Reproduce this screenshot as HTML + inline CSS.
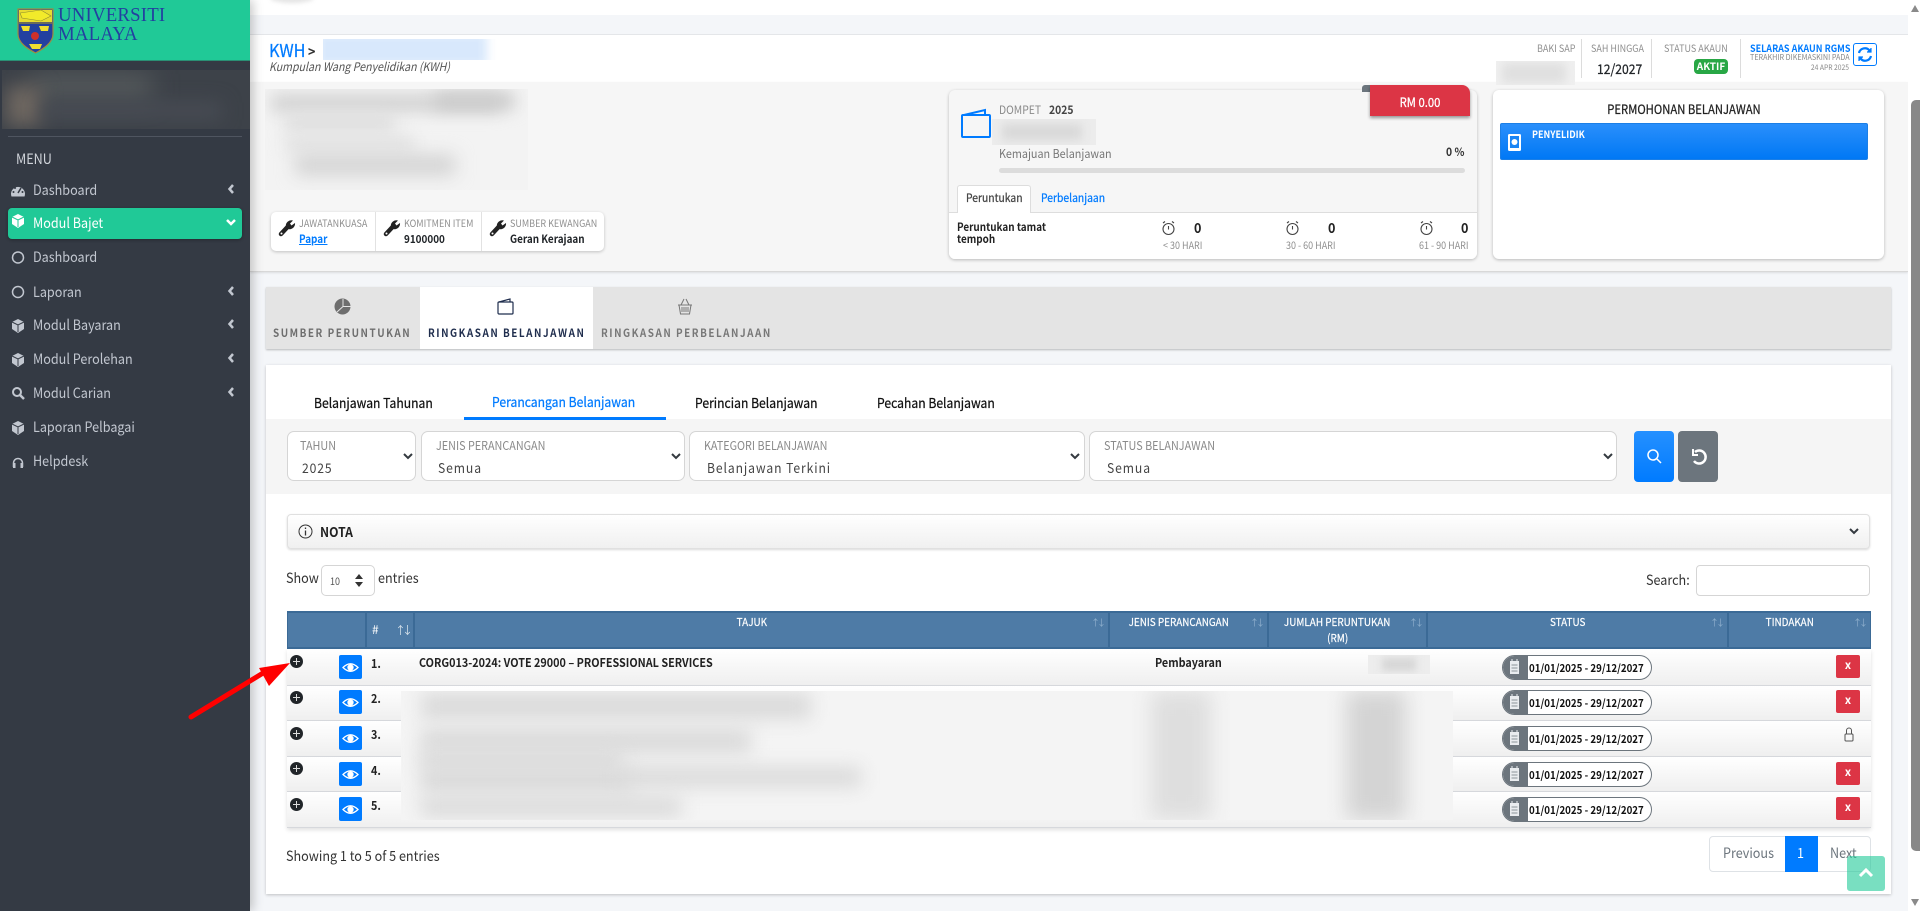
<!DOCTYPE html>
<html><head><meta charset="utf-8"><title>KWH</title>
<style>
*{box-sizing:border-box}
html,body{margin:0;padding:0;width:1920px;height:911px;overflow:hidden;background:#fff;font-family:"Noto Sans CJK JP","Liberation Sans",sans-serif;color:#212529}
.a{position:absolute}
.t{position:absolute;white-space:nowrap;line-height:20px;height:20px;transform:scaleX(.9);transform-origin:0 50%}
.c{transform-origin:50% 50%}
.r{transform-origin:100% 50%}
.b{font-weight:700}
.m{font-weight:400;-webkit-text-stroke:.25px currentColor}
.lbl{font-size:12px;color:#8a8a8a}
.sm{font-size:10px;color:#8f8f8f}
.side{font-size:14px;color:#c2c7d0}
.sel{position:absolute;top:431px;height:50px;background:#fff;border:1px solid #d5d5d5;border-radius:7px}
.row{position:absolute;left:287px;width:1584px;background:linear-gradient(#fff,#efefef);border-bottom:1.5px solid #d6d8dc}
.pill{position:absolute;left:1502px;width:150px;height:25px;border:1px solid #6c757d;border-radius:13px;background:#fff;overflow:hidden}
.pill i{position:absolute;left:0;top:0;width:25px;height:25px;background:#6c757d}
.eye{position:absolute;left:339px;width:23px;height:24px;background:#007bff;border-radius:2px}
.x{position:absolute;left:1836px;width:24px;height:23px;background:#dc3545;border-radius:2px;color:#fff;font-size:11px;font-weight:700;text-align:center;line-height:21px}
.plus{position:absolute;left:290px;width:13px;height:13px;border-radius:50%;background:#212529}
.plus:before{content:"";position:absolute;left:3px;top:5.75px;width:7px;height:1.5px;background:#ddd}
.plus:after{content:"";position:absolute;left:5.75px;top:3px;width:1.5px;height:7px;background:#ddd}
.th{position:absolute;top:611px;height:38px;background:#4e7ba6;border:1px solid #3b6a96;border-width:2px 1px 2px 1px;color:#fff;font-size:11px;text-align:center;line-height:16px;padding:1px 20px 0 0}
.th b{display:inline-block;font-weight:400;-webkit-text-stroke:.2px #fff;transform:scaleX(.9);white-space:nowrap}
.srt{position:absolute;top:2px;right:5px;font-size:9px;letter-spacing:-3px;color:#8fb0cd;font-weight:400}
.blur{position:absolute;filter:blur(9px);background:#dadada}
svg{position:absolute;display:block}
</style></head><body>

<!-- main backgrounds -->
<div class="a" style="left:250px;top:0;width:1658px;height:911px;background:#f4f6f9"></div>
<div class="a" style="left:250px;top:0;width:1658px;height:15px;background:#fff"></div>
<div class="a" style="left:270px;top:-8px;width:44px;height:11px;border-radius:50%;background:#e4e4e4;filter:blur(2px)"></div>
<div class="a" style="left:250px;top:34px;width:1658px;height:48px;background:#fff;border-top:1px solid #e4e6e9"></div>
<div class="a" style="left:250px;top:82px;width:1658px;height:190px;background:#f6f6f6;border-bottom:1px solid #d8d8d8;box-shadow:0 1px 2px rgba(0,0,0,.1)"></div>

<!-- sidebar -->
<div class="a" style="left:0;top:0;width:250px;height:911px;background:#343a44;box-shadow:3px 0 10px rgba(0,0,0,.22)"></div>
<div class="a" style="left:0;top:0;width:250px;height:61px;background:#20c997;border-bottom:1px solid #2a8f74"></div>
<svg style="left:17px;top:8px" width="37" height="46" viewBox="0 0 37 46"><path d="M1 1H36V26C36 35 26 41 18.500 45 11 41 1 35 1 26Z" fill="#2340a0" stroke="#a08a40" stroke-width="1.200"/><path d="M2 2H35V14H2Z" fill="#e8dc30"/><path d="M3 5L24 2 34 8 24 13 5 10Z" fill="#f2ea2a" stroke="#8a8a30" stroke-width=".6"/><path d="M2 14H35V16H2Z" fill="#6b6b5a"/><path d="M4 18h9l-1 5H6ZM22 18h10l-1 5h-7Z" fill="#f0de30"/><circle cx="18" cy="28" r="4" fill="#d0302a"/><path d="M12 36h13l-2 5H15Z" fill="#f0de30"/></svg>
<div class="t" style="left:58px;top:5px;font:400 20px/20px 'Liberation Serif',serif;color:#2340a0;letter-spacing:.2px;transform:scaleX(.94)">UNIVERSITI</div>
<div class="t" style="left:58px;top:24px;font:400 20px/20px 'Liberation Serif',serif;color:#2340a0;letter-spacing:.2px;transform:scaleX(.94)">MALAYA</div>
<div class="a" style="left:2px;top:70px;width:248px;height:59px;overflow:hidden;background:#3d4249"><div class="a" style="left:30px;top:4px;width:120px;height:26px;background:#555a5c;filter:blur(12px)"></div><div class="a" style="left:4px;top:16px;width:36px;height:40px;background:#6d6660;filter:blur(9px)"></div><div class="a" style="left:40px;top:32px;width:180px;height:18px;background:#484c54;filter:blur(9px)"></div></div>
<div class="a" style="left:8px;top:136px;width:234px;height:1px;background:#4f5560"></div>
<div class="t side" style="left:16px;top:149px;color:#d0d4da">MENU</div>
<div class="a" style="left:8px;top:208px;width:234px;height:31px;background:#20c997;border-radius:4px;box-shadow:0 1px 3px rgba(0,0,0,.3)"></div>
<div class="t side" style="left:33px;top:180px">Dashboard</div>
<div class="t side" style="left:33px;top:213px;color:#fff">Modul Bajet</div>
<div class="t side" style="left:33px;top:247px">Dashboard</div>
<div class="t side" style="left:33px;top:282px">Laporan</div>
<div class="t side" style="left:33px;top:315px">Modul Bayaran</div>
<div class="t side" style="left:33px;top:349px">Modul Perolehan</div>
<div class="t side" style="left:33px;top:383px">Modul Carian</div>
<div class="t side" style="left:33px;top:417px">Laporan Pelbagai</div>
<div class="t side" style="left:33px;top:451px">Helpdesk</div>
<svg style="left:0;top:170px" width="250" height="310" viewBox="0 170 250 310" fill="#c2c7d0">
<path d="M11.500 196.500a7 7 0 1 1 13 0Z"/><path d="M18 193l3-5" stroke="#343a44" stroke-width="1.500"/><circle cx="15" cy="188" r="1" fill="#343a44"/><circle cx="13.500" cy="192" r="1" fill="#343a44"/><circle cx="22.500" cy="192" r="1" fill="#343a44"/>
<path d="M12 217l6-3 6 3v7l-6 4-6-4Z" fill="#fff"/><path d="M12 217l6 3 6-3M18 220v7" stroke="#20c997" fill="none"/>
<circle cx="18" cy="257.500" r="5.500" fill="none" stroke="#c2c7d0" stroke-width="1.500"/>
<circle cx="18" cy="292" r="5.500" fill="none" stroke="#c2c7d0" stroke-width="1.500"/>
<path d="M12 322l6-3 6 3v7l-6 4-6-4Z"/><path d="M12 322l6 3 6-3M18 325v7" stroke="#343a44" fill="none"/>
<path d="M12 356l6-3 6 3v7l-6 4-6-4Z"/><path d="M12 356l6 3 6-3M18 359v7" stroke="#343a44" fill="none"/>
<circle cx="17" cy="392" r="4" fill="none" stroke="#c2c7d0" stroke-width="2"/><path d="M20 395l4 4" stroke="#c2c7d0" stroke-width="2.500"/>
<path d="M12 424l6-3 6 3v7l-6 4-6-4Z"/><path d="M12 424l6 3 6-3M18 427v7" stroke="#343a44" fill="none"/>
<path d="M13.500 467v-4a4.500 4.500 0 0 1 9 0v4" fill="none" stroke="#c2c7d0" stroke-width="1.500"/><rect x="13" y="463" width="2.500" height="5"/><rect x="20.500" y="463" width="2.500" height="5"/>
<g fill="none" stroke="#c2c7d0" stroke-width="2.500"><path d="M233 185l-3.500 4 3.500 4M233 287l-3.500 4 3.500 4M233 320l-3.500 4 3.500 4M233 354l-3.500 4 3.500 4M233 388l-3.500 4 3.500 4"/></g>
<path d="M227 220l4 4 4-4" fill="none" stroke="#fff" stroke-width="2.500"/>
</svg>

<!-- header -->
<div class="t m" style="left:269px;top:41px;font-size:17.500px;color:#007bff;transform:scaleX(.93)">KWH</div>
<div class="t b" style="left:308px;top:42px;font-size:14px;color:#333">&gt;</div>
<div class="a" style="left:323px;top:39px;width:182px;height:21px;overflow:hidden;background:#fff"><div class="a" style="left:-6px;top:-6px;width:170px;height:33px;background:#d8e8fc;filter:blur(5px)"></div></div>
<div class="t" style="left:269px;top:57px;font-size:11.800px;font-style:italic;color:#555">Kumpulan Wang Penyelidikan (KWH)</div>

<div class="t sm r" style="left:1533px;top:38px;width:40px;text-align:right">BAKI SAP</div>
<div class="a" style="left:1496px;top:61px;width:79px;height:24px;overflow:hidden;background:#f0f0f0"><div class="a" style="left:6px;top:2px;width:64px;height:20px;background:#dfdfdf;filter:blur(5px)"></div></div>
<div class="a" style="left:1581px;top:39px;width:1px;height:39px;background:#dcdcdc"></div>
<div class="t sm" style="left:1591px;top:38px">SAH HINGGA</div>
<div class="t m" style="left:1597px;top:58px;font-size:13.500px;color:#212529">12/2027</div>
<div class="a" style="left:1651px;top:39px;width:1px;height:39px;background:#dcdcdc"></div>
<div class="t sm" style="left:1664px;top:38px">STATUS AKAUN</div>
<div class="a" style="left:1694px;top:59px;width:34px;height:15px;background:#28a745;border-radius:4px;color:#fff;font-size:10px;font-weight:700;text-align:center;line-height:14px">AKTIF</div>
<div class="a" style="left:1740px;top:39px;width:1px;height:39px;background:#dcdcdc"></div>
<div class="t b" style="left:1749.500px;top:38px;font-size:10px;color:#007bff">SELARAS AKAUN RGMS</div>
<div class="t" style="left:1749.500px;top:48px;font-size:8px;color:#8a8a8a">TERAKHIR DIKEMASKINI PADA</div>
<div class="t r" style="left:1788px;top:58px;width:61px;font-size:7.500px;color:#8a8a8a;text-align:right">24 APR 2025</div>
<div class="a" style="left:1853px;top:43px;width:24px;height:23px;border:1.500px solid #007bff;border-radius:3px;background:#fff"></div>
<svg style="left:1853px;top:43px" width="24" height="23" viewBox="0 0 24 23" fill="none" stroke="#007bff" stroke-width="2.200"><path d="M6 10a6 6 0 0 1 10.500-2.500M18 13a6 6 0 0 1-10.500 2.500"/><path d="M18 5v4h-4M6 18v-4h4" fill="#007bff" stroke-width="1.200"/></svg>

<!-- blurred info -->
<div class="a" style="left:265px;top:89px;width:263px;height:101px;overflow:hidden;background:#f3f3f3">
<div class="a" style="left:6px;top:5px;width:230px;height:18px;background:#d2d2d2;filter:blur(8px)"></div>
<div class="a" style="left:170px;top:4px;width:80px;height:16px;background:#cacaca;filter:blur(8px)"></div>
<div class="a" style="left:20px;top:28px;width:110px;height:14px;background:#dadada;filter:blur(8px)"></div>
<div class="a" style="left:20px;top:48px;width:130px;height:14px;background:#e0e0e0;filter:blur(8px)"></div>
<div class="a" style="left:30px;top:66px;width:160px;height:20px;background:#d2d2d2;filter:blur(9px)"></div></div>

<!-- info card -->
<div class="a" style="left:271px;top:212px;width:333px;height:39px;background:#fff;border-radius:5px;box-shadow:0 1px 3px rgba(0,0,0,.22)"></div>
<div class="a" style="left:375px;top:212px;width:1px;height:39px;background:#e2e2e2"></div>
<div class="a" style="left:481px;top:212px;width:1px;height:39px;background:#e2e2e2"></div>
<svg style="left:278px;top:219px" width="18" height="18" viewBox="0 0 18 18"><path d="M3 15L9.500 8" stroke="#222" stroke-width="4.500" stroke-linecap="round"/><path d="M8 8A5.500 5.500 0 0 1 15 1.500L12 4.500 13.500 6.500 17 4A5.500 5.500 0 0 1 10 10Z" fill="#222"/><circle cx="3.500" cy="14.500" r="1" fill="#fff"/></svg>
<svg style="left:383px;top:219px" width="18" height="18" viewBox="0 0 18 18"><path d="M3 15L9.500 8" stroke="#222" stroke-width="4.500" stroke-linecap="round"/><path d="M8 8A5.500 5.500 0 0 1 15 1.500L12 4.500 13.500 6.500 17 4A5.500 5.500 0 0 1 10 10Z" fill="#222"/><circle cx="3.500" cy="14.500" r="1" fill="#fff"/></svg>
<svg style="left:489px;top:219px" width="18" height="18" viewBox="0 0 18 18"><path d="M3 15L9.500 8" stroke="#222" stroke-width="4.500" stroke-linecap="round"/><path d="M8 8A5.500 5.500 0 0 1 15 1.500L12 4.500 13.500 6.500 17 4A5.500 5.500 0 0 1 10 10Z" fill="#222"/><circle cx="3.500" cy="14.500" r="1" fill="#fff"/></svg>
<div class="t sm" style="left:299px;top:213px">JAWATANKUASA</div>
<div class="t b" style="left:299px;top:229px;font-size:11px;color:#007bff;text-decoration:underline">Papar</div>
<div class="t sm" style="left:404px;top:213px">KOMITMEN ITEM</div>
<div class="t b" style="left:404px;top:229px;font-size:11px">9100000</div>
<div class="t sm" style="left:510px;top:213px">SUMBER KEWANGAN</div>
<div class="t b" style="left:510px;top:229px;font-size:11px">Geran Kerajaan</div>

<!-- dompet card -->
<div class="a" style="left:949px;top:90px;width:528px;height:169px;background:#f6f6f6;border-radius:6px;box-shadow:0 1px 3px rgba(0,0,0,.25);overflow:hidden"><div class="a" style="left:0;top:122px;width:528px;height:47px;background:#fff;border-top:1px solid #ddd"></div></div>
<div class="a" style="left:1362px;top:85px;width:8px;height:7px;background:#6c757d;border-radius:3px 0 0 0"></div>
<div class="a" style="left:1370px;top:85px;width:100px;height:31px;background:#dc3545;border-radius:0 8px 0 0;box-shadow:0 2px 3px rgba(0,0,0,.4)"></div>
<div class="t c m" style="left:1370px;top:92px;width:100px;text-align:center;font-size:12.500px;color:#fff">RM 0.00</div>
<svg style="left:960px;top:107px" width="32" height="32" viewBox="0 0 32 32" fill="none" stroke="#007bff" stroke-width="2"><rect x="2" y="8" width="28" height="22" rx="1"/><path d="M4 8l21-5v5"/></svg>
<div class="t lbl" style="left:999px;top:100px;font-size:11.500px">DOMPET</div>
<div class="t b" style="left:1049px;top:100px;font-size:11.500px;color:#444">2025</div>
<div class="a" style="left:992px;top:119px;width:104px;height:26px;overflow:hidden;background:#ececec"><div class="a" style="left:10px;top:5px;width:80px;height:16px;background:#d8d8d8;filter:blur(5px)"></div></div>
<div class="t" style="left:999px;top:144px;font-size:12px;color:#777">Kemajuan Belanjawan</div>
<div class="t b" style="left:1446px;top:142px;font-size:11.500px;color:#333">0 %</div>
<div class="a" style="left:999px;top:168px;width:466px;height:5px;background:#dcdcdc;border-radius:3px"></div>
<div class="a" style="left:957px;top:185px;width:74px;height:28px;background:#fff;border:1px solid #ddd;border-bottom:none;border-radius:3px 3px 0 0"></div>
<div class="t m" style="left:966px;top:188px;font-size:11.500px;color:#444">Peruntukan</div>
<div class="t m" style="left:1041px;top:188px;font-size:11.500px;color:#007bff">Perbelanjaan</div>
<div class="t b" style="left:957px;top:217px;font-size:11px;color:#222">Peruntukan tamat</div>
<div class="t b" style="left:957px;top:229px;font-size:11px;color:#222">tempoh</div>
<div class="t b" style="left:1194px;top:218px;font-size:14px;color:#222">0</div>
<div class="t b" style="left:1328px;top:218px;font-size:14px;color:#222">0</div>
<div class="t b" style="left:1461px;top:218px;font-size:14px;color:#222">0</div>
<div class="t" style="left:1163px;top:235px;font-size:10px;color:#8f8f8f">&lt; 30 HARI</div>
<div class="t" style="left:1286px;top:235px;font-size:10px;color:#8f8f8f">30 - 60 HARI</div>
<div class="t" style="left:1419px;top:235px;font-size:10px;color:#8f8f8f">61 - 90 HARI</div>
<svg style="left:1161px;top:220px" width="15" height="16" viewBox="0 0 15 16" fill="none" stroke="#444" stroke-width="1.100"><circle cx="7.500" cy="9" r="5.500"/><path d="M7.500 6v3.500M2 3l2-1.500M13 3l-2-1.500"/></svg>
<svg style="left:1285px;top:220px" width="15" height="16" viewBox="0 0 15 16" fill="none" stroke="#444" stroke-width="1.100"><circle cx="7.500" cy="9" r="5.500"/><path d="M7.500 6v3.500M2 3l2-1.500M13 3l-2-1.500"/></svg>
<svg style="left:1419px;top:220px" width="15" height="16" viewBox="0 0 15 16" fill="none" stroke="#444" stroke-width="1.100"><circle cx="7.500" cy="9" r="5.500"/><path d="M7.500 6v3.500M2 3l2-1.500M13 3l-2-1.500"/></svg>

<!-- permohonan -->
<div class="a" style="left:1493px;top:90px;width:391px;height:169px;background:#fff;border-radius:6px;box-shadow:0 1px 3px rgba(0,0,0,.25)"></div>
<div class="t c m" style="left:1493px;top:99px;width:382px;text-align:center;font-size:12.500px;color:#222">PERMOHONAN BELANJAWAN</div>
<div class="a" style="left:1500px;top:123px;width:368px;height:37px;background:linear-gradient(#2a8ffb,#0078f5);border:1px solid #1c7fe6;border-radius:2px"></div>
<div class="t b" style="left:1532px;top:124px;font-size:10px;color:#fff">PENYELIDIK</div>
<svg style="left:1507px;top:133px" width="15" height="19" viewBox="0 0 15 19"><rect x="1" y="1" width="13" height="17" rx="1.500" fill="#fff"/><rect x="3" y="3" width="9" height="12" fill="#1a85f5"/><circle cx="7.500" cy="9" r="3" fill="#fff"/></svg>

<!-- tab bar -->
<div class="a" style="left:266px;top:287px;width:1625px;height:62px;background:#e4e4e4;box-shadow:0 1px 2px rgba(0,0,0,.25)"></div>
<div class="a" style="left:420px;top:287px;width:173px;height:62px;background:#fff"></div>
<svg style="left:334px;top:298px" width="17" height="17" viewBox="0 0 17 17"><circle cx="8.500" cy="8.500" r="8" fill="#6e6e6e"/><path d="M9 1v7.500h7.500M9 8.500L3 14" stroke="#e4e4e4" fill="none"/></svg>
<svg style="left:497px;top:297px" width="17" height="18" viewBox="0 0 17 18" fill="none" stroke="#1f2d4d" stroke-width="1.200"><rect x="1" y="5" width="15" height="12" rx="1"/><path d="M2 5l11-3v3"/></svg>
<svg style="left:677px;top:298px" width="16" height="17" viewBox="0 0 16 17" fill="none" stroke="#777" stroke-width="1"><path d="M1 7h14M2 7l1.500 9h9L14 7M4 7l3-6M12 7L9 1M5 9v5M7 9v5M9 9v5M11 9v5"/></svg>
<div class="t b" style="left:273px;top:323px;font-size:11px;letter-spacing:1.700px;color:#6e6e6e">SUMBER PERUNTUKAN</div>
<div class="t b" style="left:428px;top:323px;font-size:11px;letter-spacing:1.700px;color:#1f2d4d">RINGKASAN BELANJAWAN</div>
<div class="t b" style="left:601px;top:323px;font-size:11px;letter-spacing:1.700px;color:#777">RINGKASAN PERBELANJAAN</div>

<!-- main card -->
<div class="a" style="left:266px;top:365px;width:1625px;height:529px;background:#fff;box-shadow:0 1px 3px rgba(0,0,0,.22)"></div>
<div class="a" style="left:266px;top:419px;width:1625px;height:75px;background:#f5f5f5"></div>
<div class="t m" style="left:314px;top:392px;font-size:13.500px;color:#111">Belanjawan Tahunan</div>
<div class="t m" style="left:492px;top:391px;font-size:13.500px;color:#007bff">Perancangan Belanjawan</div>
<div class="a" style="left:464px;top:417px;width:202px;height:3px;background:#007bff"></div>
<div class="t m" style="left:695px;top:392px;font-size:13.500px;color:#111">Perincian Belanjawan</div>
<div class="t m" style="left:877px;top:392px;font-size:13.500px;color:#111">Pecahan Belanjawan</div>

<div class="sel" style="left:287px;width:129px"></div>
<div class="sel" style="left:421px;width:264px"></div>
<div class="sel" style="left:689px;width:396px"></div>
<div class="sel" style="left:1089px;width:528px"></div>
<div class="t lbl" style="left:300px;top:436px">TAHUN</div><div class="t" style="left:302px;top:457px;font-size:13.500px;letter-spacing:1px;color:#444">2025</div>
<div class="t lbl" style="left:436px;top:436px">JENIS PERANCANGAN</div><div class="t" style="left:438px;top:457px;font-size:13.500px;letter-spacing:1px;color:#444">Semua</div>
<div class="t lbl" style="left:704px;top:436px">KATEGORI BELANJAWAN</div><div class="t" style="left:707px;top:457px;font-size:13.500px;letter-spacing:1px;color:#444">Belanjawan Terkini</div>
<div class="t lbl" style="left:1104px;top:436px">STATUS BELANJAWAN</div><div class="t" style="left:1107px;top:457px;font-size:13.500px;letter-spacing:1px;color:#444">Semua</div>
<svg style="left:0;top:0" width="1920" height="911" fill="none" stroke="#343a40" stroke-width="2"><path d="M404 454l4 4 4-4M672 454l4 4 4-4M1071 454l4 4 4-4M1604 454l4 4 4-4"/></svg>
<div class="a" style="left:1634px;top:431px;width:40px;height:51px;background:linear-gradient(#2590ff,#007bff);border-radius:4px"></div>
<div class="a" style="left:1678px;top:431px;width:40px;height:51px;background:#6c757d;border-radius:4px"></div>
<svg style="left:1634px;top:431px" width="84" height="51" viewBox="0 0 84 51" fill="none" stroke="#fff" stroke-width="1.500"><circle cx="19" cy="24" r="5"/><path d="M23 28l4 4"/><path d="M61 21a6.500 6.500 0 1 1-1 9" stroke-width="2.500"/><path d="M59 18v6h5" stroke-width="2"/></svg>

<!-- nota -->
<div class="a" style="left:287px;top:514px;width:1583px;height:35px;background:linear-gradient(#fff,#f0f0f0);border:1px solid #e0e0e0;border-radius:4px;box-shadow:0 1px 2px rgba(0,0,0,.15)"></div>
<svg style="left:298px;top:524px" width="15" height="15" viewBox="0 0 15 15" fill="none" stroke="#333"><circle cx="7.500" cy="7.500" r="6.500"/><path d="M7.500 6.500v5M7.500 3.500v1.500" stroke-width="1.300"/></svg>
<div class="t b" style="left:320px;top:521px;font-size:13.500px;color:#222">NOTA</div>
<svg style="left:1846px;top:525px" width="16" height="12" viewBox="0 0 16 12" fill="none" stroke="#343a40" stroke-width="2"><path d="M4 4l4 4 4-4"/></svg>

<!-- show/search -->
<div class="t" style="left:286px;top:568px;font-size:14px;color:#333">Show</div>
<div class="a" style="left:321px;top:565px;width:54px;height:31px;border:1px solid #d5d5d5;border-radius:5px;background:#fff"></div>
<div class="t" style="left:330px;top:571px;font-size:10px;color:#555">10</div>
<svg style="left:354px;top:574px" width="10" height="13" viewBox="0 0 10 13" fill="#333"><path d="M5 0l4 5H1ZM5 13l-4-5h8Z"/></svg>
<div class="t" style="left:378px;top:568px;font-size:14px;color:#333">entries</div>
<div class="t" style="left:1646px;top:570px;font-size:14px;color:#333">Search:</div>
<div class="a" style="left:1696px;top:565px;width:174px;height:31px;border:1px solid #d5d5d5;border-radius:4px;background:#fff"></div>

<!-- table -->
<div class="a" style="left:287px;top:649px;width:1584px;height:179px;box-shadow:0 2px 4px rgba(0,0,0,.12)"></div>
<div class="th" style="left:287px;width:79px"></div>
<div class="th" style="left:366px;width:48px;padding:0"><span class="a" style="left:5px;top:9px;font-size:12px">#</span><span class="a" style="left:28px;top:9px;font-size:11px;letter-spacing:-4px;color:#d4e0ea">↑↓</span></div>
<div class="th" style="left:414px;width:695px"><span class="srt">↑↓</span><b>TAJUK</b></div>
<div class="th" style="left:1109px;width:159px"><span class="srt">↑↓</span><b>JENIS PERANCANGAN</b></div>
<div class="th" style="left:1268px;width:159px"><span class="srt">↑↓</span><b>JUMLAH PERUNTUKAN</b><br><b>(RM)</b></div>
<div class="th" style="left:1427px;width:301px"><span class="srt">↑↓</span><b>STATUS</b></div>
<div class="th" style="left:1728px;width:143px"><span class="srt">↑↓</span><b>TINDAKAN</b></div>

<div class="row" style="top:649px;height:37px"></div>
<div class="row" style="top:686px;height:35px"></div>
<div class="row" style="top:721px;height:36px"></div>
<div class="row" style="top:757px;height:35px"></div>
<div class="row" style="top:792px;height:36px"></div>

<div class="plus" style="top:655px"></div><div class="plus" style="top:691px"></div><div class="plus" style="top:727px"></div><div class="plus" style="top:762px"></div><div class="plus" style="top:798px"></div>
<div class="eye" style="top:655px"></div><div class="eye" style="top:690px"></div><div class="eye" style="top:726px"></div><div class="eye" style="top:762px"></div><div class="eye" style="top:797px"></div>
<svg style="left:339px;top:655px" width="23" height="170" viewBox="0 0 23 170" fill="none" stroke="#fff"><g stroke-width="1.300"><path d="M4 12.500Q11.500 5 19 12.500 11.500 20 4 12.500Z"/><circle cx="11.500" cy="12.500" r="2.500" fill="#fff"/></g><g stroke-width="1.300" transform="translate(0 35)"><path d="M4 12.500Q11.500 5 19 12.500 11.500 20 4 12.500Z"/><circle cx="11.500" cy="12.500" r="2.500" fill="#fff"/></g><g stroke-width="1.300" transform="translate(0 71)"><path d="M4 12.500Q11.500 5 19 12.500 11.500 20 4 12.500Z"/><circle cx="11.500" cy="12.500" r="2.500" fill="#fff"/></g><g stroke-width="1.300" transform="translate(0 107)"><path d="M4 12.500Q11.500 5 19 12.500 11.500 20 4 12.500Z"/><circle cx="11.500" cy="12.500" r="2.500" fill="#fff"/></g><g stroke-width="1.300" transform="translate(0 142)"><path d="M4 12.500Q11.500 5 19 12.500 11.500 20 4 12.500Z"/><circle cx="11.500" cy="12.500" r="2.500" fill="#fff"/></g></svg>
<div class="t b" style="left:371px;top:654px;font-size:12px;color:#222">1.</div>
<div class="t b" style="left:371px;top:689px;font-size:12px;color:#222">2.</div>
<div class="t b" style="left:371px;top:725px;font-size:12px;color:#222">3.</div>
<div class="t b" style="left:371px;top:761px;font-size:12px;color:#222">4.</div>
<div class="t b" style="left:371px;top:796px;font-size:12px;color:#222">5.</div>
<div class="t b" style="left:419px;top:653px;font-size:12px;color:#222">CORG013-2024: VOTE 29000 – PROFESSIONAL SERVICES</div>
<div class="t b" style="left:1155px;top:653px;font-size:12px;color:#222">Pembayaran</div>
<div class="a" style="left:1368px;top:655px;width:62px;height:19px;overflow:hidden;background:#ededed"><div class="a" style="left:14px;top:3px;width:34px;height:13px;background:#d6d6d6;filter:blur(4px)"></div></div>

<div class="a" style="left:401px;top:691px;width:1052px;height:129px;overflow:hidden;background:#f4f4f4">
<div class="blur" style="left:20px;top:2px;width:390px;height:26px"></div>
<div class="blur" style="left:20px;top:38px;width:330px;height:24px"></div>
<div class="blur" style="left:20px;top:60px;width:200px;height:20px"></div>
<div class="blur" style="left:20px;top:76px;width:210px;height:26px"></div>
<div class="blur" style="left:220px;top:76px;width:240px;height:20px"></div>
<div class="blur" style="left:20px;top:106px;width:260px;height:20px"></div>
<div class="a" style="left:750px;top:0;width:60px;height:129px;background:#dedede;filter:blur(10px)"></div>
<div class="a" style="left:945px;top:0;width:60px;height:129px;background:#d4d4d4;filter:blur(10px)"></div>
</div>

<!-- pills -->
<div class="pill" style="top:655px"><i></i></div><div class="pill" style="top:690px"><i></i></div><div class="pill" style="top:726px"><i></i></div><div class="pill" style="top:762px"><i></i></div><div class="pill" style="top:797px"><i></i></div>
<svg style="left:1502px;top:655px" width="25" height="170" viewBox="0 0 25 170" fill="#e9ecef"><path d="M8 6h9v13H8ZM8 41h9v13H8ZM8 77h9v13H8ZM8 113h9v13H8ZM8 148h9v13H8Z"/><path d="M10 4v3M15 4v3M10 39v3M15 39v3M10 75v3M15 75v3M10 111v3M15 111v3M10 146v3M15 146v3" stroke="#e9ecef"/><path d="M9.500 10h6M9.500 13h6M9.500 16h6M9.500 45h6M9.500 48h6M9.500 51h6M9.500 81h6M9.500 84h6M9.500 87h6M9.500 117h6M9.500 120h6M9.500 123h6M9.500 152h6M9.500 155h6M9.500 158h6" stroke="#6c757d" stroke-width=".8"/></svg>
<div class="t b" style="left:1529px;top:658px;font-size:10.800px;color:#111">01/01/2025 - 29/12/2027</div>
<div class="t b" style="left:1529px;top:693px;font-size:10.800px;color:#111">01/01/2025 - 29/12/2027</div>
<div class="t b" style="left:1529px;top:729px;font-size:10.800px;color:#111">01/01/2025 - 29/12/2027</div>
<div class="t b" style="left:1529px;top:765px;font-size:10.800px;color:#111">01/01/2025 - 29/12/2027</div>
<div class="t b" style="left:1529px;top:800px;font-size:10.800px;color:#111">01/01/2025 - 29/12/2027</div>

<div class="x" style="top:655px">x</div><div class="x" style="top:690px">x</div><div class="x" style="top:762px">x</div><div class="x" style="top:797px">x</div>
<svg style="left:1843px;top:727px" width="12" height="15" viewBox="0 0 12 15" fill="none" stroke="#555"><rect x="2" y="7" width="8" height="7" rx="1"/><path d="M3.500 7V3.500a2.500 2.500 0 0 1 5 0V7"/></svg>

<!-- footer -->
<div class="t" style="left:286px;top:846px;font-size:14px;color:#333">Showing 1 to 5 of 5 entries</div>
<div class="a" style="left:1709px;top:836px;width:162px;height:36px;background:#fff;border:1px solid #dee2e6;border-radius:4px"></div>
<div class="a" style="left:1785px;top:836px;width:33px;height:36px;background:#007bff"></div>
<div class="t" style="left:1723px;top:843px;font-size:14px;color:#6c757d">Previous</div>
<div class="t" style="left:1797px;top:843px;font-size:14px;color:#fff">1</div>
<div class="t" style="left:1830px;top:843px;font-size:14px;color:#6c757d">Next</div>
<div class="a" style="left:1847px;top:856px;width:38px;height:35px;background:rgba(32,201,151,.6);border-radius:3px"></div>
<svg style="left:1847px;top:856px" width="38" height="35" viewBox="0 0 38 35" fill="none" stroke="#fff" stroke-width="3"><path d="M13 20l6-6 6 6"/></svg>

<!-- arrow -->
<svg style="left:180px;top:650px" width="120" height="75" viewBox="0 0 120 75"><path d="M11 67L88 20" stroke="#f00" stroke-width="5" stroke-linecap="round"/><path d="M110 13L79 18 89 36Z" fill="#f00"/></svg>

<!-- scrollbar -->
<div class="a" style="left:1908px;top:0;width:12px;height:911px;background:#fff"></div>
<div class="a" style="left:1911px;top:100px;width:9px;height:751px;background:#888;border-radius:5px 0 0 5px"></div>
<svg style="left:1909px;top:0" width="11" height="911" fill="#8a8a8a"><path d="M6 5l4 7H2ZM6 906l4-7H2Z"/></svg>
</body></html>
